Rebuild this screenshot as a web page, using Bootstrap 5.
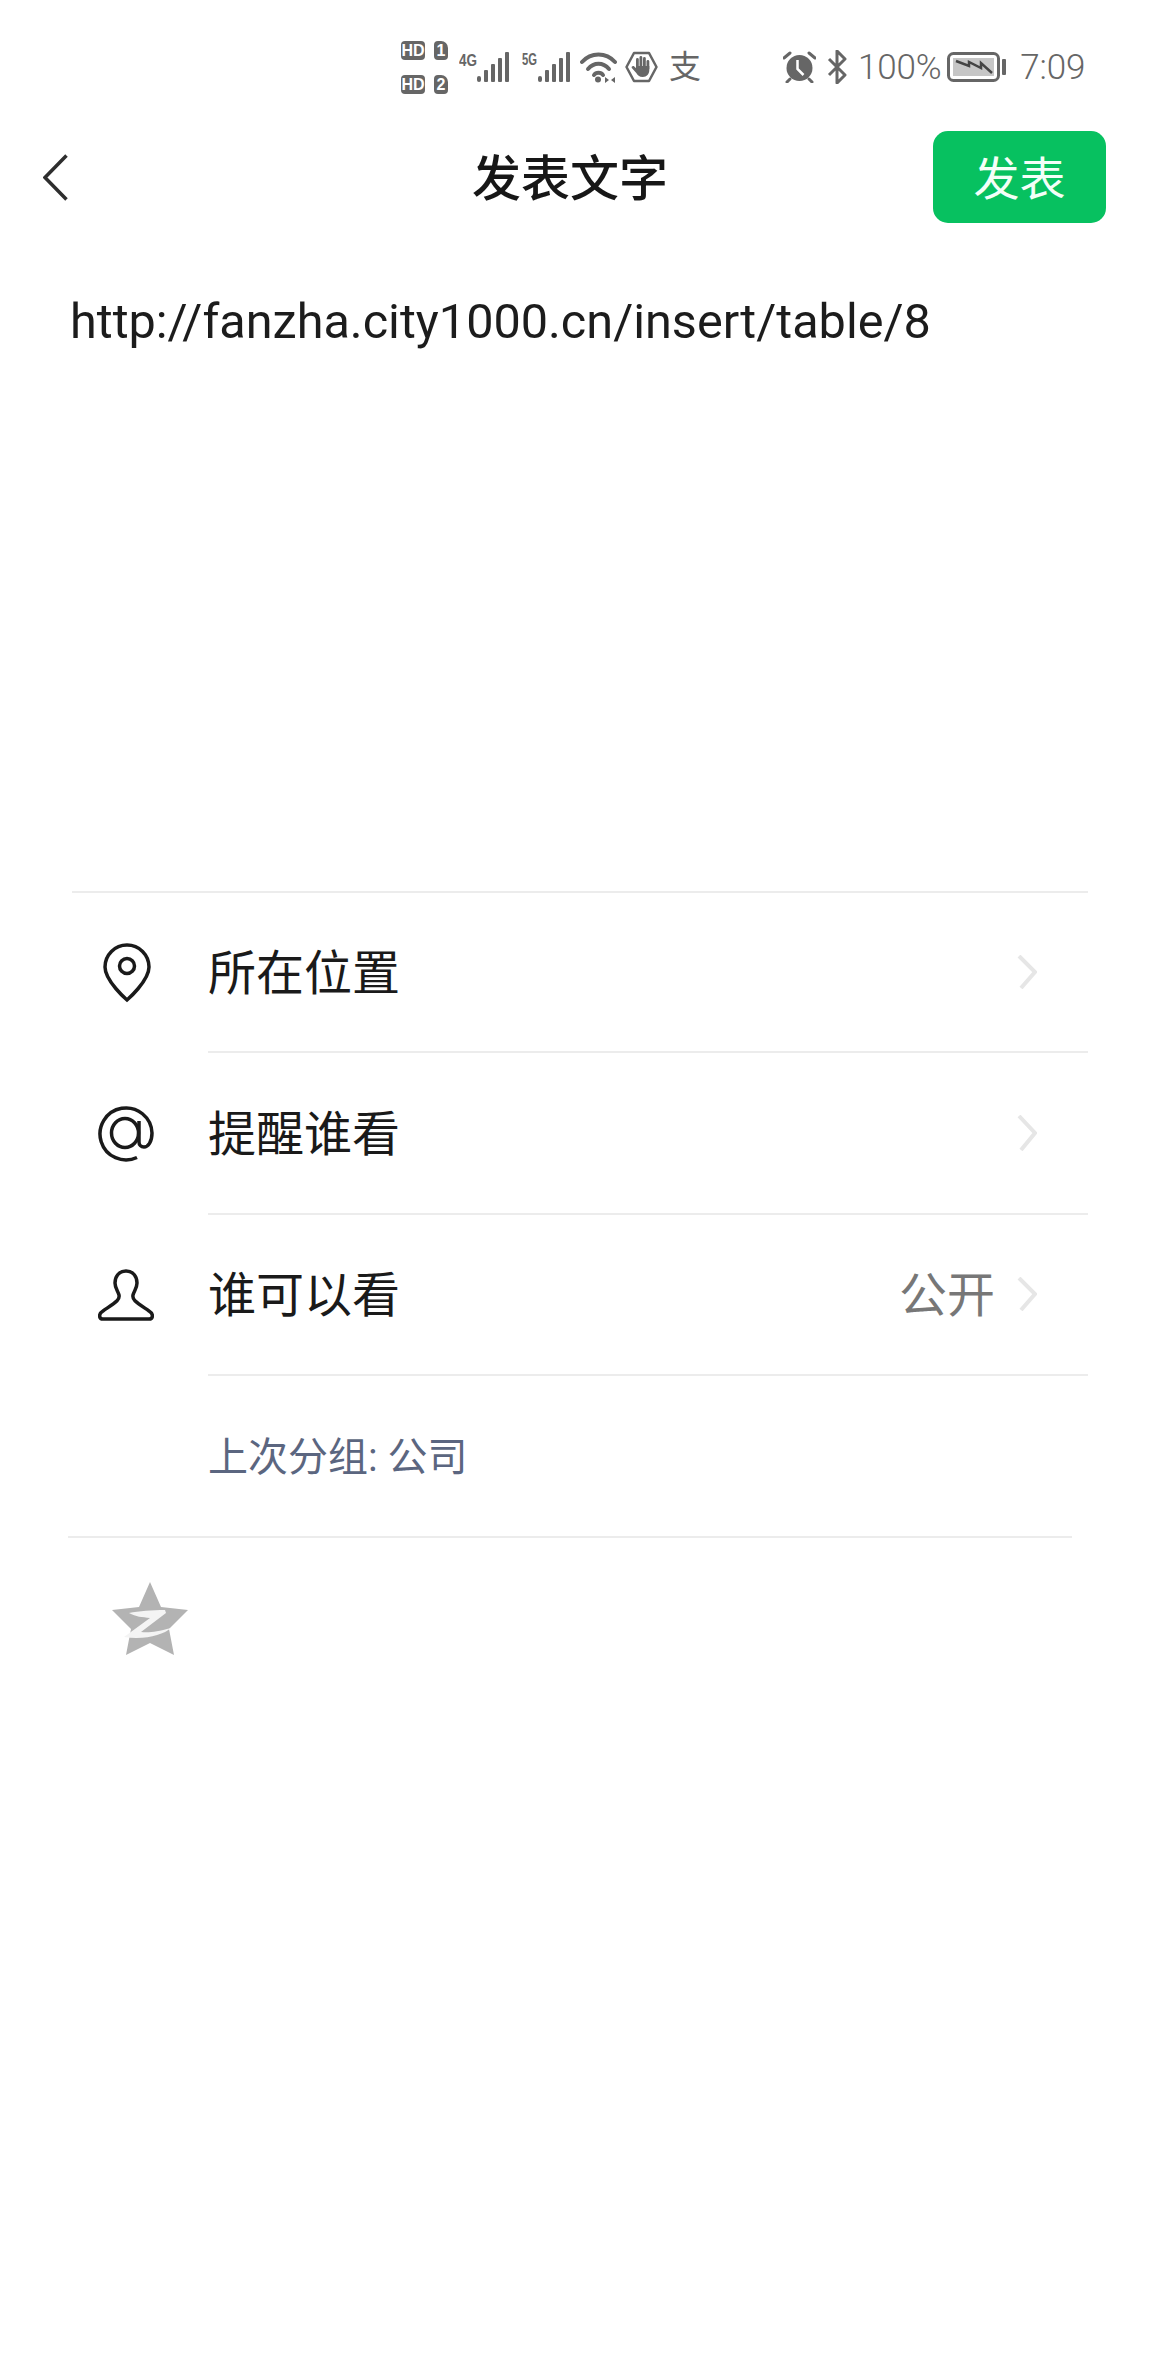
<!doctype html>
<html lang="zh">
<head>
<meta charset="utf-8">
<title>发表文字</title>
<link href="https://cdn.jsdelivr.net/npm/bootstrap@5.3.0/dist/css/bootstrap.min.css" rel="stylesheet">
<style>
body{background:#fff;font-family:Roboto,"Noto Sans CJK SC",sans-serif;color:#1a1a1a;width:1152px;height:2376px;overflow:hidden}
.sbar{height:130px;padding:4px 0 0 401px;color:#666}
.sl-6{margin-left:6px}.sl-8{margin-left:8px}.sl-9{margin-left:9px}.sl-10{margin-left:10px}.sl-11{margin-left:11px}.sl-12{margin-left:12px}.sl-14{margin-left:14px}.sl-83{margin-left:83px}
.simrow{gap:9px;height:19px}
.simcol{gap:15px}
.hdbox,.simbox{background:#666;color:#fff;font:700 16px/19px "Liberation Sans",sans-serif;text-align:center;border-radius:4px;height:19px}
.hdbox{width:24px}
.simbox{width:14px;border-top-right-radius:7px}
.stxt{font-size:35px;font-weight:300;line-height:1;color:#666;letter-spacing:-.2px}
.zhi{font-size:32px;line-height:1;width:31px;color:#666;font-weight:400}
.head{height:94px}
.backcol{width:472px;padding-left:43px}
.ttl{font-size:49px;font-weight:500;line-height:1;width:196px;white-space:nowrap;color:#171717;padding-top:4px}
.pub{width:173px;height:92px;margin-right:46px;background:#07c160;border:0;border-radius:15px;color:#f3fff8;font-size:46px;line-height:1;padding:4px 0 0}
.pub:hover{background:#07c160;color:#f3fff8}
.body-txt{height:667px;padding:68px 0 0 70px;font-size:48.6px;line-height:60px;color:#1c1c1c;font-weight:400}
.optlist{margin:0 64px 0 72px;border-top:2px solid #ececec}
.optrow{height:161.5px}
.optrow:first-child{height:160px}
.iconcol{width:136px;padding-left:26px;flex:none}
.optbody{border-bottom:2px solid #ececec;padding-right:51px;font-size:48px;line-height:1;color:#1a1a1a}
.optlbl{padding-top:4px}
.optval{color:#777;font-size:48px;margin-right:22px;padding-top:4px}
.lastgrp{margin:0 80px 0 68px;height:161.5px;padding:4px 0 0 140px;border-bottom:2px solid #ececec;font-size:40px;color:#5b6680}
.star{padding:44px 0 0 112px}
</style>
</head>
<body>
<div class="sbar d-flex align-items-center">
  <div class="simcol d-flex flex-column">
    <div class="simrow d-flex"><span class="hdbox">HD</span><span class="simbox">1</span></div>
    <div class="simrow d-flex"><span class="hdbox">HD</span><span class="simbox">2</span></div>
  </div>
  <svg class="sl-11" width="51" height="32" viewBox="0 0 51 32"><text x="0" y="15" font-family="Liberation Sans" font-weight="700" font-size="17" fill="#666" textLength="18" lengthAdjust="spacingAndGlyphs">4G</text><g fill="#666"><rect x="18" y="25" width="4" height="6" rx="2"/><rect x="25" y="19" width="4" height="12" rx="1"/><rect x="32" y="13" width="4" height="18" rx="1"/><rect x="39" y="7" width="4" height="24" rx="1"/><rect x="46" y="1" width="4" height="30" rx="1"/></g></svg>
  <svg class="sl-12" width="49" height="32" viewBox="0 0 49 32"><text x="0" y="14" font-family="Liberation Sans" font-weight="700" font-size="17" fill="#666" textLength="15" lengthAdjust="spacingAndGlyphs">5G</text><g fill="#666"><rect x="16" y="25" width="4" height="6" rx="2"/><rect x="23" y="19" width="4" height="12" rx="1"/><rect x="30" y="13" width="4" height="18" rx="1"/><rect x="37" y="7" width="4" height="24" rx="1"/><rect x="44" y="1" width="4" height="30" rx="1"/></g></svg>
  <svg class="sl-9" width="37" height="32" viewBox="0 0 37 32"><g fill="none" stroke="#666" stroke-width="4" stroke-linecap="round"><path d="M2 11C11 1 26 1 35 11"/><path d="M8 18C14 11 23 11 29 18"/><path d="M14 24C16 21 21 21 23 24"/></g><circle cx="18" cy="28.500" r="3" fill="#666"/><path d="M29 29l-4-3v6zM31 29l4-3v6z" fill="#666"/></svg>
  <svg class="sl-8" width="33" height="32" viewBox="0 0 33 32"><path d="M1.500 16L9 2h15l7.500 14L24 30H9z" fill="none" stroke="#666" stroke-width="2.500" stroke-linejoin="round"/><g fill="#666"><rect x="11" y="7" width="2.800" height="12" rx="1.400"/><rect x="14.500" y="5" width="2.800" height="13" rx="1.400"/><rect x="18" y="6" width="2.800" height="12" rx="1.400"/><rect x="21.500" y="9" width="2.800" height="10" rx="1.400"/><path d="M11 15h13.300v4c0 4-2.500 7-6.500 7-3.500 0-5.300-2-6.500-4l-4.500-5c-.7-1.500 1.300-2.500 2.500-1.500l2 2z"/></g></svg>
  <span class="zhi sl-11">支</span>
  <svg class="sl-83" width="33" height="32" viewBox="0 0 33 32"><circle cx="16.500" cy="17" r="13" fill="#666"/><path d="M14.500 9v9l6 6" fill="none" stroke="#fff" stroke-width="2.500"/><path d="M1 7l6-5M32 7l-6-5M7 28l-3 3M26 28l3 3" stroke="#666" stroke-width="3" stroke-linecap="round"/></svg>
  <svg class="sl-11" width="21" height="34" viewBox="0 0 21 34"><path d="M2 9l16 16-8 8V1l8 8L2 25" fill="none" stroke="#666" stroke-width="3" stroke-linejoin="round"/></svg>
  <span class="stxt sl-10">100%</span>
  <svg class="sl-6" width="59" height="30" viewBox="0 0 59 30"><rect x="1.500" y="1.500" width="50" height="27" rx="5" fill="#fff" stroke="#666" stroke-width="3"/><rect x="6" y="6" width="41" height="18" fill="#c6c6c6"/><path d="M9 9L22 14V10L34 16V11L45 21" fill="none" stroke="#444" stroke-width="2.500"/><rect x="55" y="7" width="4" height="16" rx="1" fill="#666"/></svg>
  <span class="stxt sl-14">7:09</span>
</div>

<div class="head d-flex align-items-center">
  <div class="backcol"><svg class="d-block" width="25" height="47" viewBox="0 0 25 47"><path d="M23.500 1.500L2 23.500l21.500 22" fill="none" stroke="#2e2e2e" stroke-width="3.500"/></svg></div>
  <div class="ttl">发表文字</div>
  <button type="button" class="btn pub ms-auto">发表</button>
</div>

<div class="body-txt">http://fanzha.city1000.cn/insert/table/8</div>

<div class="optlist">
  <div class="optrow d-flex">
    <div class="iconcol d-flex align-items-center"><svg class="ms-1" width="50" height="60" viewBox="0 0 50 60"><path d="M25 57C25 57 3 38 3 24a22 22 0 0 1 44 0C47 38 25 57 25 57z" fill="none" stroke="#1a1a1a" stroke-width="3.500"/><circle cx="25" cy="23" r="7.500" fill="none" stroke="#1a1a1a" stroke-width="3.500"/></svg></div>
    <div class="optbody flex-grow-1 d-flex align-items-center justify-content-between"><span class="optlbl">所在位置</span><svg width="20" height="34" viewBox="0 0 20 34"><path d="M2 1l16 16L4 33" fill="none" stroke="#e6e6e6" stroke-width="4"/></svg></div>
  </div>
  <div class="optrow d-flex">
    <div class="iconcol d-flex align-items-center"><svg width="56" height="56" viewBox="0 0 56 56"><g fill="none" stroke="#1a1a1a" stroke-width="3.500"><path d="M39 51.500A26 26 0 1 1 54 27c0 9-4 14-8 14-3 0-5-2-5-5V15"/><ellipse cx="27" cy="27" rx="13.500" ry="14.500"/></g></svg></div>
    <div class="optbody flex-grow-1 d-flex align-items-center justify-content-between"><span class="optlbl">提醒谁看</span><svg width="20" height="36" viewBox="0 0 20 36"><path d="M2 1l16 17L4 35" fill="none" stroke="#e6e6e6" stroke-width="4"/></svg></div>
  </div>
  <div class="optrow d-flex">
    <div class="iconcol d-flex align-items-center"><svg width="56" height="52" viewBox="0 0 56 52"><path d="M28 2C20.500 2 17 8 17 14c0 5 3 8 4 12 1 5-3 7-16 16-5 3-4 8 0 8h46c4 0 5-5 0-8-13-9-17-11-16-16 1-4 4-7 4-12C39 8 35.500 2 28 2z" fill="none" stroke="#1a1a1a" stroke-width="3.500" stroke-linejoin="round"/></svg></div>
    <div class="optbody flex-grow-1 d-flex align-items-center"><span class="optlbl">谁可以看</span><span class="optval ms-auto">公开</span><svg width="20" height="34" viewBox="0 0 20 34"><path d="M2 1l16 16L4 33" fill="none" stroke="#e6e6e6" stroke-width="4"/></svg></div>
  </div>
</div>
<div class="lastgrp d-flex align-items-center">上次分组: 公司</div>
<div class="star"><svg class="d-block" width="76" height="73" viewBox="0 0 76 73"><path d="M38 0l11 25 27 3-19 19 5 26-24-12-24 12 5-26L0 28l27-3z" fill="#b3b3b3"/><path d="M17 31c10-2 23-3 36-3l1 3-25 19c8 1 15 0 30-4-8 7-26 12-47 9l26-19c-8-1-14-1-21-5z" fill="#f4f4f4"/></svg></div>
<script src="https://cdn.jsdelivr.net/npm/bootstrap@5.3.0/dist/js/bootstrap.bundle.min.js"></script>
</body>
</html>
